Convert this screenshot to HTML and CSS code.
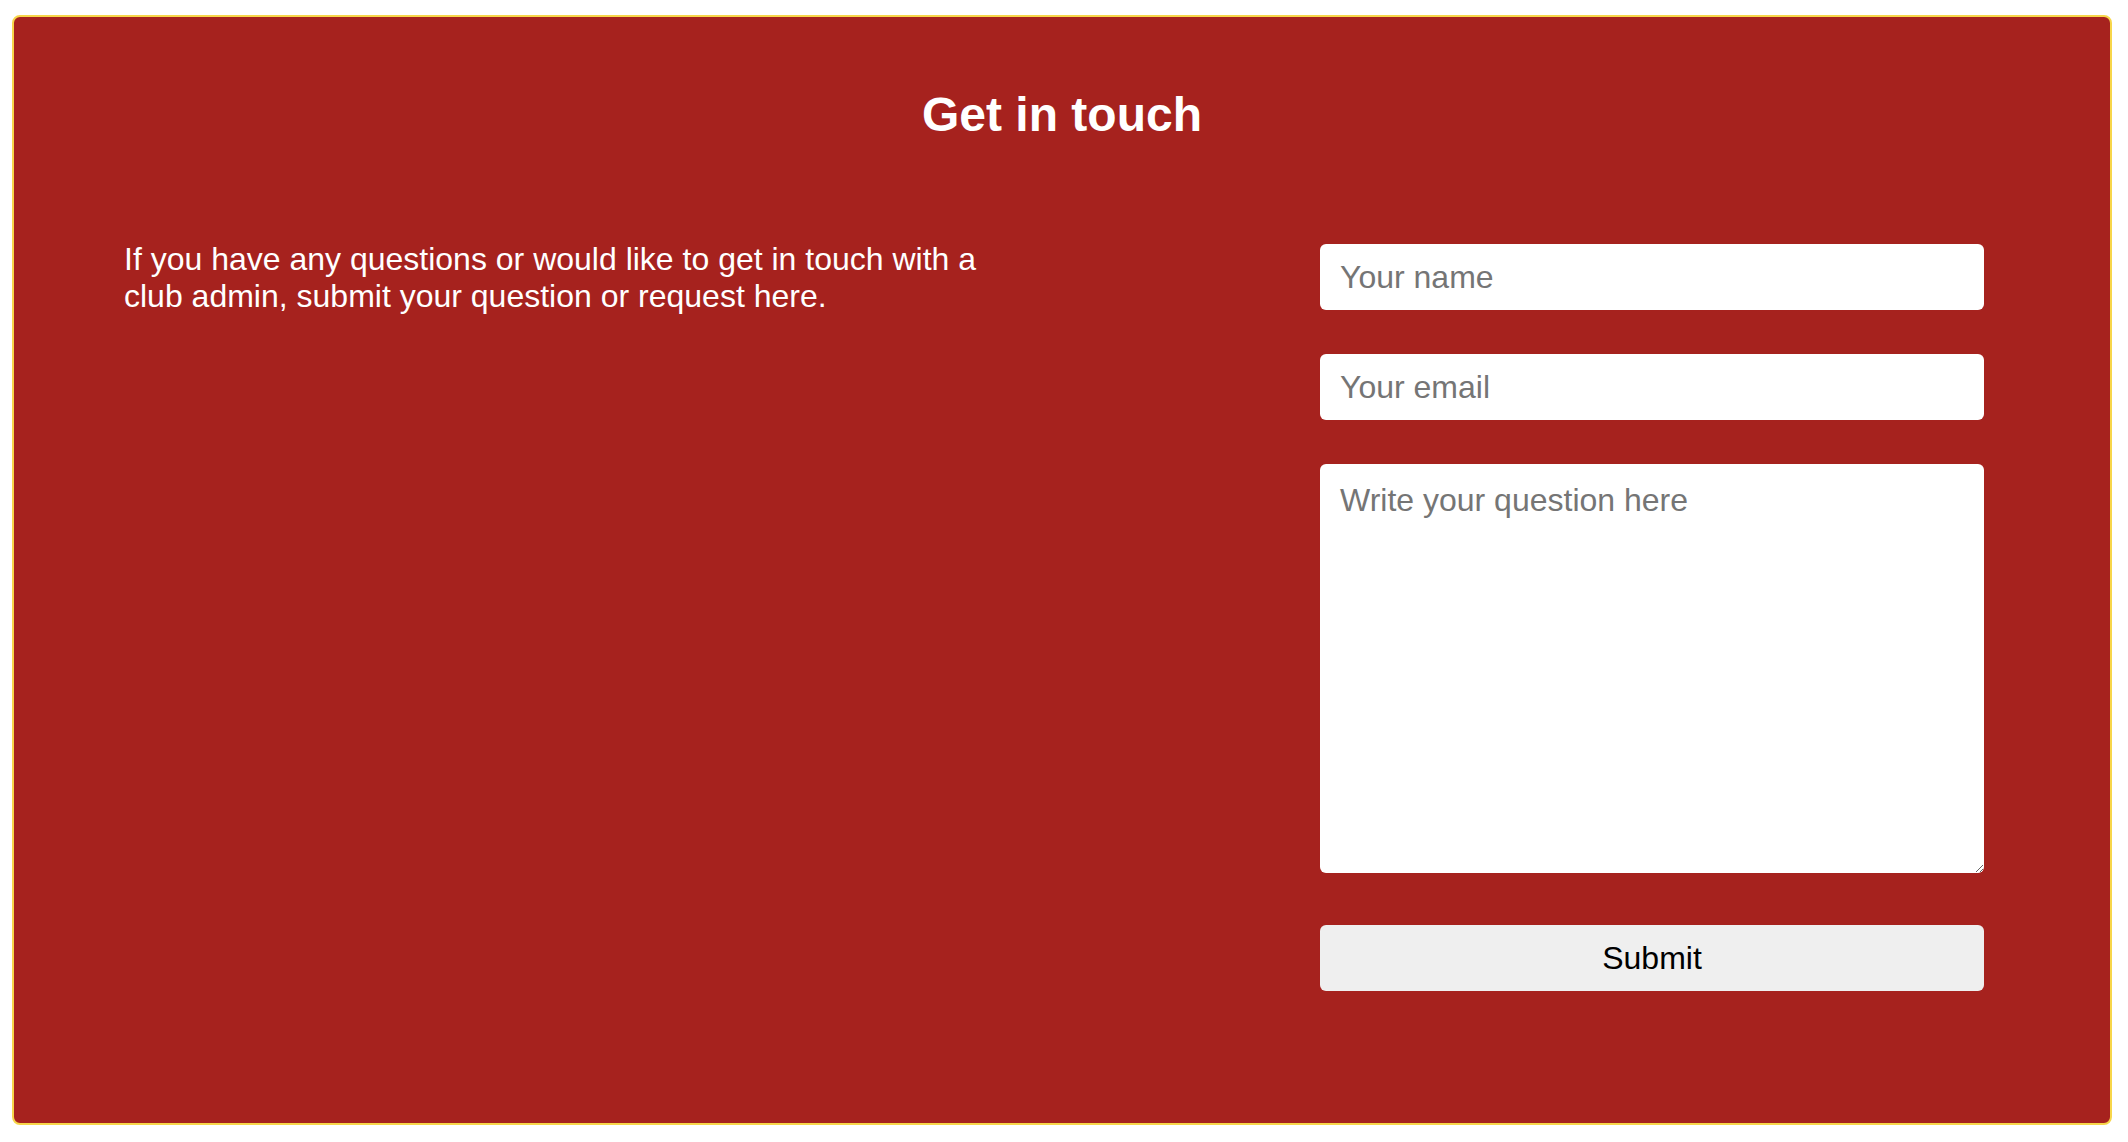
FILE: index.html
```html
<!DOCTYPE html>
<html lang="en">
<head>
<meta charset="utf-8">
<title>Get in touch</title>
<link rel="stylesheet" href="styles.css">
</head>
<body>
  <section class="contact">
    <h1 class="contact-title">Get in touch</h1>
    <div class="contact-row">
      <div class="contact-info">
        <p>If you have any questions or would like to get in touch with a club admin, submit your question or request here.</p>
      </div>
      <form class="contact-form">
        <input class="field" type="text" placeholder="Your name">
        <input class="field" type="email" placeholder="Your email">
        <textarea class="field field-area" placeholder="Write your question here"></textarea>
        <button class="submit" type="button">Submit</button>
      </form>
    </div>
  </section>
</body>
</html>
```

FILE: styles.css
```css
* {
  box-sizing: border-box;
}

html, body {
  margin: 0;
  padding: 0;
  background: #ffffff;
}

body {
  font-family: "Liberation Sans", Arial, sans-serif;
}

.contact {
  margin: 15px 16px 0 12px;
  border: 2px solid #f7d64a;
  border-radius: 8px;
  background: #a6221e;
  padding: 70px 126px 132px 110px;
}

.contact-title {
  margin: 0 -126px 0 -110px;
  text-align: center;
  color: #ffffff;
  font-size: 48px;
  font-weight: 700;
  line-height: normal;
}

.contact-row {
  display: flex;
  justify-content: space-between;
  align-items: flex-start;
  margin-top: 102px;
}

.contact-info p {
  margin: -3px 0 0 0;
  max-width: 880px;
  color: #ffffff;
  font-size: 32px;
  line-height: normal;
}

.contact-form {
  width: 664px;
  display: flex;
  flex-direction: column;
}

.field {
  display: block;
  width: 100%;
  height: 66px;
  border: none;
  border-radius: 6px;
  background: #ffffff;
  padding: 0 20px;
  margin: 0 0 44px 0;
  font-family: "Liberation Sans", Arial, sans-serif;
  font-size: 32px;
  color: #000000;
  outline: none;
}

.field::placeholder {
  color: #757575;
}

.field-area {
  height: 409px;
  padding: 18px 20px;
  margin-bottom: 52px;
  resize: vertical;
  line-height: normal;
}

.submit {
  display: block;
  width: 100%;
  height: 66px;
  border: none;
  border-radius: 6px;
  background: #efefef;
  color: #000000;
  font-family: "Liberation Sans", Arial, sans-serif;
  font-size: 32px;
  padding: 0;
  cursor: pointer;
}
```
